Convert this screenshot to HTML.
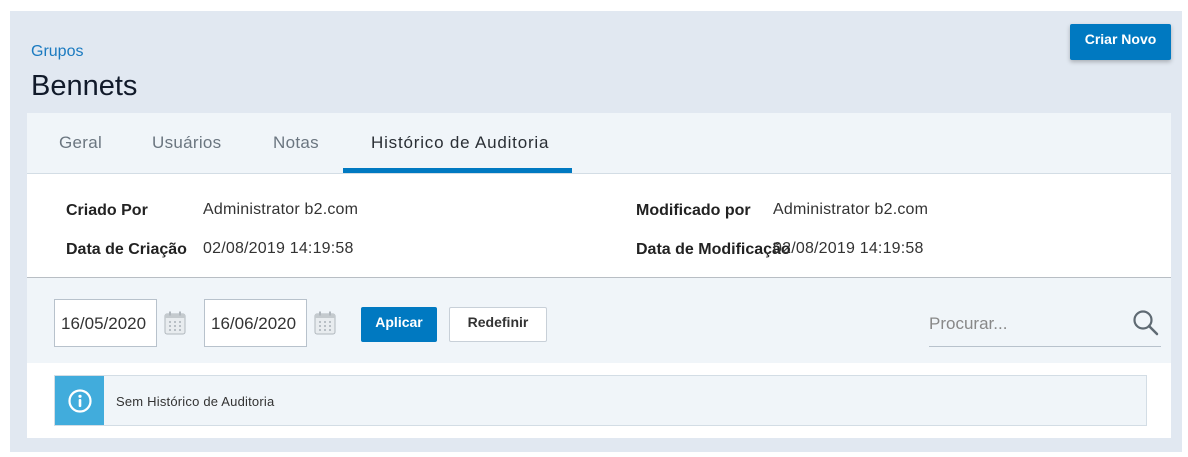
<!DOCTYPE html>
<html><head><meta charset="utf-8"><style>
*{box-sizing:border-box;margin:0;padding:0}
body{width:1188px;height:457px;background:#fff;font-family:"Liberation Sans",sans-serif;position:relative;overflow:hidden}
.outer{position:absolute;left:10px;top:11px;width:1172px;height:441px;background:#e1e8f1}
.abs{position:absolute}
.card{position:absolute;left:27px;top:113px;width:1144px;height:325px;background:#fff}
.tabs{position:absolute;left:0;top:0;width:1144px;height:61px;background:#f0f5f9;border-bottom:1px solid #d3dde5}
.tab{position:absolute;top:20px;font-size:17px;color:#6b7680;letter-spacing:0.3px}
.lbl{font-size:16px;font-weight:bold;color:#222}
.val{font-size:16px;color:#333;letter-spacing:0.2px}
.inp{position:absolute;top:299px;width:103px;height:48px;border:1px solid #b8c2cc;background:#fff;font-size:17px;color:#333;padding:14px 0 0 6px}
</style></head><body>
<div class="outer"></div>
<div class="abs" style="left:31px;top:43px;font-size:16px;color:#1a7ac0">Grupos</div>
<div class="abs" style="left:31px;top:70px;font-size:29px;color:#111a2a">Bennets</div>
<div class="abs" style="left:1070px;top:24px;width:101px;height:36px;background:#0079c1;border-radius:2px;box-shadow:0 2px 4px rgba(0,0,0,.25);color:#fff;font-weight:bold;font-size:14px;text-align:center;line-height:30px">Criar Novo</div>
<div class="card">
 <div class="tabs">
  <div class="tab" style="left:32px">Geral</div>
  <div class="tab" style="left:125px">Usuários</div>
  <div class="tab" style="left:246px">Notas</div>
  <div class="tab" style="left:344px;color:#2a2f35;letter-spacing:0.8px">Histórico de Auditoria</div>
  <div class="abs" style="left:316px;top:55px;width:229px;height:5px;background:#0079c1"></div>
 </div>
 <div class="abs" style="left:0;top:164px;width:1144px;height:86px;background:#f0f5f9;border-top:1px solid #b8bec4"></div>
</div>
<div class="abs lbl" style="left:66px;top:202px">Criado Por</div>
<div class="abs val" style="left:203px;top:201px">Administrator b2.com</div>
<div class="abs lbl" style="left:66px;top:241px">Data de Criação</div>
<div class="abs val" style="left:203px;top:240px">02/08/2019 14:19:58</div>
<div class="abs lbl" style="left:636px;top:202px">Modificado por</div>
<div class="abs val" style="left:773px;top:201px">Administrator b2.com</div>
<div class="abs lbl" style="left:636px;top:241px">Data de Modificação</div>
<div class="abs val" style="left:773px;top:240px">02/08/2019 14:19:58</div>

<div class="inp" style="left:54px">16/05/2020</div>
<div class="inp" style="left:204px">16/06/2020</div>
<svg class="abs" style="left:164px;top:311px" width="22" height="24" viewBox="0 0 22 24"><rect x="1" y="3" width="20" height="20" rx="2" fill="#e8ecef" stroke="#b0b7bd"/><rect x="1" y="3" width="20" height="4" fill="#c4cace"/><rect x="5" y="0.5" width="2" height="4" fill="#b0b7bd"/><rect x="15" y="0.5" width="2" height="4" fill="#b0b7bd"/><g fill="#b8bfc5"><rect x="5" y="10" width="2" height="2"/><rect x="10" y="10" width="2" height="2"/><rect x="15" y="10" width="2" height="2"/><rect x="5" y="14" width="2" height="2"/><rect x="10" y="14" width="2" height="2"/><rect x="15" y="14" width="2" height="2"/><rect x="5" y="18" width="2" height="2"/><rect x="10" y="18" width="2" height="2"/><rect x="15" y="18" width="2" height="2"/></g></svg>
<svg class="abs" style="left:314px;top:311px" width="22" height="24" viewBox="0 0 22 24"><rect x="1" y="3" width="20" height="20" rx="2" fill="#e8ecef" stroke="#b0b7bd"/><rect x="1" y="3" width="20" height="4" fill="#c4cace"/><rect x="5" y="0.5" width="2" height="4" fill="#b0b7bd"/><rect x="15" y="0.5" width="2" height="4" fill="#b0b7bd"/><g fill="#b8bfc5"><rect x="5" y="10" width="2" height="2"/><rect x="10" y="10" width="2" height="2"/><rect x="15" y="10" width="2" height="2"/><rect x="5" y="14" width="2" height="2"/><rect x="10" y="14" width="2" height="2"/><rect x="15" y="14" width="2" height="2"/><rect x="5" y="18" width="2" height="2"/><rect x="10" y="18" width="2" height="2"/><rect x="15" y="18" width="2" height="2"/></g></svg>
<div class="abs" style="left:361px;top:307px;width:76px;height:35px;background:#0079c1;border-radius:2px;color:#fff;font-weight:bold;font-size:14px;text-align:center;line-height:30px">Aplicar</div>
<div class="abs" style="left:449px;top:307px;width:98px;height:35px;background:#fff;border:1px solid #c8d0d8;border-radius:2px;color:#333;font-weight:bold;font-size:14px;text-align:center;line-height:29px">Redefinir</div>
<div class="abs" style="left:929px;top:314px;font-size:17px;color:#888">Procurar...</div>
<div class="abs" style="left:929px;top:346px;width:232px;height:1px;background:#b8c2cc"></div>
<svg class="abs" style="left:1132px;top:309px" width="28" height="28" viewBox="0 0 28 28"><circle cx="11" cy="11" r="8.5" fill="none" stroke="#5f6a73" stroke-width="2.2"/><line x1="17" y1="17" x2="25" y2="25" stroke="#5f6a73" stroke-width="2.5" stroke-linecap="round"/></svg>

<div class="abs" style="left:54px;top:375px;width:1093px;height:51px;background:#f0f5f9;border:1px solid #d3dde5"></div>
<div class="abs" style="left:55px;top:376px;width:49px;height:49px;background:#41acdc"></div>
<svg class="abs" style="left:67px;top:388px" width="26" height="26" viewBox="0 0 26 26"><circle cx="13" cy="13" r="10.5" fill="none" stroke="#fff" stroke-width="2.2"/><circle cx="13" cy="8.3" r="1.6" fill="#fff"/><rect x="11.7" y="11" width="2.6" height="8" rx="1" fill="#fff"/></svg>
<div class="abs" style="left:116px;top:394px;font-size:13px;color:#333;letter-spacing:0.2px">Sem Histórico de Auditoria</div>
</body></html>
